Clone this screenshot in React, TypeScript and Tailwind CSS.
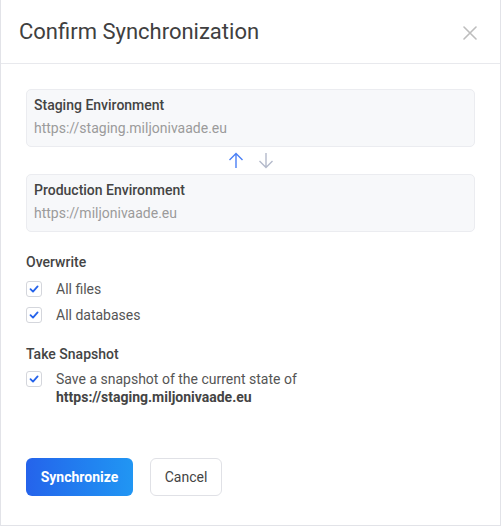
import React from "react";

function Check() {
  return (
    <span className="w-4 h-4 shrink-0 rounded-[3px] border border-[#d4d6dc] bg-white flex items-center justify-center">
      <svg width="10" height="10" viewBox="0 0 10 10" fill="none">
        <path d="M1.5 5.2 L4 7.6 L8.6 2.4" stroke="#2563eb" strokeWidth="1.8" strokeLinecap="round" strokeLinejoin="round" />
      </svg>
    </span>
  );
}

function EnvCard({ title, url }: { title: string; url: string }) {
  return (
    <div className="rounded-[5px] border border-[#ebecf0] bg-[#f7f8fa] px-[7px] pt-[5px] pb-[8px] flex flex-col gap-[3px]">
      <span className="text-[14px] leading-[20px] font-medium text-[#444]">{title}</span>
      <span className="text-[14px] leading-[20px] text-[#9b9b9b]">{url}</span>
    </div>
  );
}

export default function App() {
  return (
    <div className="w-[501px] h-[526px] bg-white border-l border-r border-b border-[#e2e3e8] flex flex-col font-['Roboto',sans-serif]">
      <header className="h-[64px] shrink-0 border-b border-[#e8e9ed] pl-[18px] pr-[23px] flex items-center justify-between">
        <h1 className="text-[22px] text-[#404040] font-normal">Confirm Synchronization</h1>
        <svg width="14" height="14" viewBox="0 0 14 14" className="mt-[2px]">
          <path d="M1 1 L13 13 M13 1 L1 13" stroke="#bdbdbd" strokeWidth="1.6" strokeLinecap="round" />
        </svg>
      </header>

      <div className="px-[25px] pt-[25px] flex flex-col">
        <EnvCard title="Staging Environment" url="https://staging.miljonivaade.eu" />
        <div className="h-[27px] flex items-center justify-center gap-[14px]">
          <svg width="16" height="17" viewBox="0 0 16 17" fill="none">
            <path d="M8 16 V1.5 M1.5 8 L8 1.5 L14.5 8" stroke="#4a7ff5" strokeWidth="1.4" />
          </svg>
          <svg width="16" height="17" viewBox="0 0 16 17" fill="none">
            <path d="M8 1 V15.5 M1.5 9 L8 15.5 L14.5 9" stroke="#b4bacb" strokeWidth="1.4" />
          </svg>
        </div>
        <EnvCard title="Production Environment" url="https://miljonivaade.eu" />

        <h2 className="mt-[20px] text-[14px] leading-[20px] font-medium text-[#444]">Overwrite</h2>
        <div className="mt-[9px] flex flex-col gap-[10px]">
          <label className="flex items-center gap-[14px] text-[14px] leading-[16px] text-[#555]">
            <Check />
            All files
          </label>
          <label className="flex items-center gap-[14px] text-[14px] leading-[16px] text-[#555]">
            <Check />
            All databases
          </label>
        </div>

        <h2 className="mt-[21px] text-[14px] leading-[20px] font-medium text-[#444]">Take Snapshot</h2>
        <label className="mt-[6px] flex items-start gap-[14px] text-[14px] leading-[18px] text-[#555]">
          <span className="mt-[1px]">
            <Check />
          </span>
          <span>
            Save a snapshot of the current state of
            <br />
            <b className="font-bold text-[#444]">https://staging.miljonivaade.eu</b>
          </span>
        </label>

        <div className="mt-[52px] flex gap-[17px]">
          <button className="h-[38px] w-[107px] rounded-[6px] bg-gradient-to-r from-[#2563eb] to-[#2196f3] text-white text-[14px] font-bold">
            Synchronize
          </button>
          <button className="h-[38px] w-[72px] rounded-[6px] border border-[#e0e1e6] bg-white text-[#444] text-[14px]">
            Cancel
          </button>
        </div>
      </div>
    </div>
  );
}
